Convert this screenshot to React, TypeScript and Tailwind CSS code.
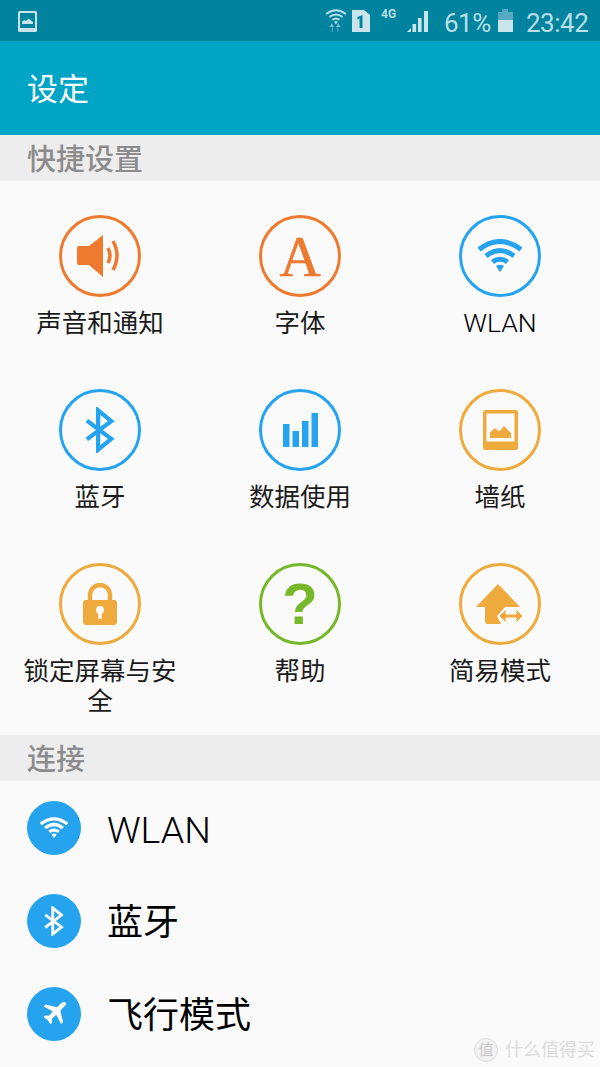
const font = { fontFamily: "Roboto, 'Noto Sans CJK SC', sans-serif" };

const ORANGE = "#ed7a2f";
const AMBER = "#eeaa3c";
const BLUE = "#26a3ee";
const GREEN = "#77b82a";

function WifiArcs({ color, width = 5 }: { color: string; width?: number }) {
  return (
    <svg viewBox="0 0 44 34" className="h-full w-full" fill="none" stroke={color} strokeWidth={width}>
      <path d="M1 10.5 Q22 -5.5 43 10.5" />
      <path d="M8 17 Q22 6 36 17" />
      <path d="M14.5 23 Q22 17.5 29.5 23" />
      <path d="M18 27 Q22 24.5 26 27 L22 33 Z" fill={color} stroke="none" />
    </svg>
  );
}

function Bluetooth({ color, width = 4.5 }: { color: string; width?: number }) {
  return (
    <svg viewBox="0 0 32 48" className="h-full w-full" fill="none" stroke={color} strokeWidth={width}>
      <path d="M2 14 L28 33.5 L14 45 V3 L28 14.5 L2 34" />
    </svg>
  );
}

function Speaker() {
  return (
    <svg viewBox="0 0 46 42" className="h-[42px] w-[46px]">
      <path d="M0 13 Q0 11 2 11 H12 L26 0 V42 L12 30 H2 Q0 30 0 28 Z" fill={ORANGE} />
      <path d="M31 13 Q35 20.5 31 28" fill="none" stroke={ORANGE} strokeWidth="3.6" />
      <path d="M36 6 Q44 20.5 36 35" fill="none" stroke={ORANGE} strokeWidth="3.6" />
    </svg>
  );
}

function Bars() {
  return (
    <svg viewBox="0 0 35 34" className="h-[34px] w-[35px]" fill={BLUE}>
      <rect x="0" y="11" width="6.5" height="23" />
      <rect x="9.5" y="18" width="6.5" height="16" />
      <rect x="19" y="8" width="6.5" height="26" />
      <rect x="28.5" y="0" width="6.5" height="34" />
    </svg>
  );
}

function Wallpaper() {
  return (
    <svg viewBox="0 0 35 40" className="h-[40px] w-[35px]">
      <rect x="0" y="0" width="35" height="40" rx="2.5" fill={AMBER} />
      <rect x="3.5" y="3.5" width="28" height="28" fill="#fafafa" />
      <path d="M7 28 V22.5 L12 18 L16 21.5 L21 16 L28 23 V28 Z" fill={AMBER} />
    </svg>
  );
}

function Lock() {
  return (
    <svg viewBox="0 0 34 42" className="h-[42px] w-[34px]">
      <path d="M7 19 V12 A10 10 0 0 1 27 12 V19" fill="none" stroke={AMBER} strokeWidth="4.4" />
      <rect x="0" y="17" width="34" height="25" rx="3" fill={AMBER} />
      <circle cx="17" cy="27" r="4" fill="#fafafa" />
      <rect x="15.3" y="27" width="3.4" height="9" fill="#fafafa" />
    </svg>
  );
}

function EasyMode() {
  return (
    <svg viewBox="0 0 48 40" className="h-[40px] w-[48px]">
      <path d="M22 0 L44 23 H29 L21 32 L25 40 H12 Q9 40 9 37 V23 H0 Z" fill={AMBER} />
      <path d="M23 32 L30 25 V30 H40 V25 L47 32 L40 39 V34 H30 V39 Z" fill={AMBER} stroke="#fafafa" strokeWidth="1" />
    </svg>
  );
}

function Plane() {
  return (
    <svg viewBox="0 0 24 24" className="h-[25px] w-[25px]" fill="#fff">
      <path d="M23 1.6 C21.8 .4 19.6 .8 18 2.4 L14.4 6 L3.4 3.4 L1.6 5.2 L10.4 10 L6.4 14.2 L3 13.8 L1.4 15.4 L5.4 18.2 L8.2 22.2 L9.8 20.6 L9.4 17.2 L13.6 13.2 L18.4 22 L20.2 20.2 L17.6 9.2 L21.2 5.6 C22.8 4 23.6 2.6 23 1.6 Z" />
    </svg>
  );
}

const quickItems = [
  { label: "声音和通知", color: ORANGE, icon: <Speaker /> },
  {
    label: "字体",
    color: ORANGE,
    icon: (
      <span
        className="text-[57px] leading-none text-[#ed7a2f] [-webkit-text-stroke:0.7px_#ed7a2f]"
        style={{ fontFamily: "'Liberation Serif', serif" }}
      >
        A
      </span>
    ),
  },
  { label: "WLAN", color: BLUE, icon: <div className="h-[34px] w-[44px]"><WifiArcs color={BLUE} /></div> },
  { label: "蓝牙", color: BLUE, icon: <div className="h-[46px] w-[30px]"><Bluetooth color={BLUE} /></div> },
  { label: "数据使用", color: BLUE, icon: <Bars /> },
  { label: "墙纸", color: AMBER, icon: <Wallpaper /> },
  { label: "锁定屏幕与安全", color: AMBER, icon: <Lock /> },
  {
    label: "帮助",
    color: GREEN,
    icon: <span className="text-[58px] font-bold leading-none text-[#77b82a]" style={{ fontFamily: "'Liberation Sans', sans-serif" }}>?</span>,
  },
  { label: "简易模式", color: AMBER, icon: <EasyMode /> },
];

function SectionHeader({ title }: { title: string }) {
  return (
    <div className="flex h-[46px] items-center bg-[#ededed] pl-[27px] pt-[5px] text-[29px] font-medium text-[#8c8c8c]">
      {title}
    </div>
  );
}

function StatusBar() {
  return (
    <div className="flex h-[41px] items-end bg-[#00839f] pb-[9px] pl-[18px] pr-[12px] text-[#b9dfe7]">
      <svg viewBox="0 0 19 21" className="h-[21px] w-[19px]">
        <rect width="19" height="21" rx="1.5" fill="#c9e5eb" />
        <rect x="2" y="2" width="15" height="15" fill="#00839f" />
        <path d="M4 13 V10.5 L6.5 9 L8 10 L10.5 7.5 L15 11 V13 Z" fill="#c9e5eb" />
      </svg>
      <div className="ml-auto flex items-end">
        <div className="relative h-[23px] w-[22px]">
          <div className="h-[16px] w-[22px]"><WifiArcs color="#b9dfe7" width={4} /></div>
          <svg viewBox="0 0 14 9" className="absolute bottom-0 left-[4px] h-[9px] w-[13px]">
            <path d="M3 9 V4 H0.5 L3 0 L5.5 4 H3.8 V9 Z" fill="#7db8c8" />
            <path d="M10 0 V5 H7.5 L10 9 L12.5 5 H10.8 V0 Z" fill="#7db8c8" transform="rotate(180 10 4.5)" />
          </svg>
        </div>
        <svg viewBox="0 0 18 22" className="ml-[5px] h-[22px] w-[18px]">
          <path d="M0 0 H12 L18 5 V22 H0 Z" fill="#c9e5eb" />
          <path d="M5.5 7 L10.5 5 V18 H7.6 V8.6 L5.5 9.6 Z" fill="#00839f" />
        </svg>
        <span className="mb-[12px] ml-[11px] w-[17px] text-[12px] font-bold leading-none">4G</span>
        <svg viewBox="0 0 21 21" className="ml-[9px] h-[21px] w-[21px]" fill="#c9e5eb">
          <path d="M0 21 L4 17 V21 Z" />
          <rect x="5.5" y="13" width="3.6" height="8" />
          <rect x="11" y="7" width="3.6" height="14" />
          <rect x="17" y="0" width="4" height="21" />
        </svg>
        <span className="mb-[-4px] ml-[16px] w-[49px] text-[26px] font-normal leading-none tracking-[-0.5px]">61%</span>
        <svg viewBox="0 0 15 23" className="ml-[5px] h-[23px] w-[15px]">
          <rect x="4" y="0" width="6" height="3" fill="#55aac0" />
          <rect x="0" y="3" width="15" height="20" fill="#55aac0" />
          <rect x="0" y="11" width="15" height="12" fill="#c9e5eb" />
        </svg>
        <span className="mb-[-4px] ml-[13px] w-[62px] text-[26px] font-normal leading-none tracking-[-0.5px]">23:42</span>
      </div>
    </div>
  );
}

export default function App() {
  return (
    <div className="relative h-[1067px] w-[600px] overflow-hidden bg-[#fafafa]" style={font}>
      <StatusBar />
      <div className="flex h-[94px] items-center bg-[#00a5c5] pl-[27px] pt-[4px] text-[31px] text-white">设定</div>
      <SectionHeader title="快捷设置" />

      <div className="grid h-[554px] grid-cols-3 grid-rows-[174px_174px_206px]">
        {quickItems.map((item) => (
          <div key={item.label} className="flex flex-col items-center pt-[34px]">
            <div
              className="flex h-[82px] w-[82px] items-center justify-center rounded-full border-[3px] bg-[#fafafa]"
              style={{ borderColor: item.color }}
            >
              {item.icon}
            </div>
            <div className={item.label === "WLAN" ? "mt-[11px] w-[160px] text-center text-[26.5px] font-light leading-[30px] text-black" : "mt-[11px] w-[160px] text-center text-[25.5px] leading-[30px] text-[#1a1a1a]"}>
              {item.label}
            </div>
          </div>
        ))}
      </div>

      <SectionHeader title="连接" />

      <div className="flex flex-col">
        <div className="flex h-[93px] items-center pl-[27px]">
          <div className="flex h-[54px] w-[54px] items-center justify-center rounded-full bg-[#26a3ee]">
            <div className="h-[22px] w-[28px]"><WifiArcs color="#fff" /></div>
          </div>
          <span className="ml-[26px] pt-[5px] text-[37.5px] font-light text-black">WLAN</span>
        </div>
        <div className="flex h-[93px] items-center pl-[27px]">
          <div className="flex h-[54px] w-[54px] items-center justify-center rounded-full bg-[#26a3ee]">
            <div className="h-[30px] w-[20px]"><Bluetooth color="#fff" /></div>
          </div>
          <span className="ml-[26px] pt-[5px] text-[36px] text-black">蓝牙</span>
        </div>
        <div className="flex h-[93px] items-center pl-[27px]">
          <div className="flex h-[54px] w-[54px] items-center justify-center rounded-full bg-[#26a3ee]">
            <Plane />
          </div>
          <span className="ml-[26px] pt-[5px] text-[36px] text-black">飞行模式</span>
        </div>
      </div>

      {/* watermark over the list */}
      <div className="absolute bottom-[5px] right-[5px] flex items-center text-[#dcdcdc]">
        <span className="flex h-[24px] w-[24px] items-center justify-center rounded-full border border-[#dcdcdc] bg-[#f2f2f2] text-[15px] leading-none text-[#c8c8c8]">值</span>
        <span className="ml-[7px] text-[18px] leading-none">什么值得买</span>
      </div>
    </div>
  );
}
